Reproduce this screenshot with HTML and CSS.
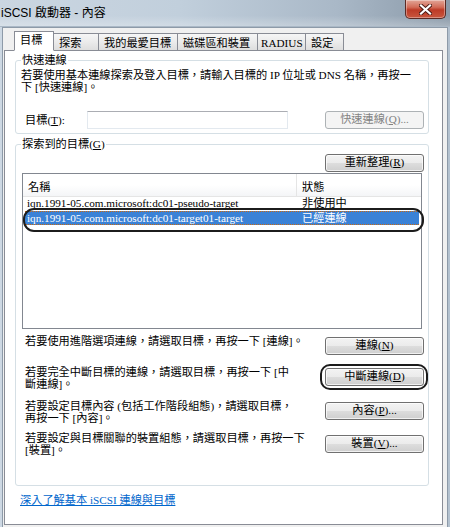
FILE: index.html
```html
<!DOCTYPE html>
<html lang="zh-Hant">
<head>
<meta charset="utf-8">
<title>iSCSI 啟動器 - 內容</title>
<link rel="stylesheet" href="styles.css">
</head>
<body>
<div class="window">
  <div class="titlebar">
    <span class="title">iSCSI 啟動器 - 內容</span>
    <span class="close">
      <svg width="13" height="11" viewBox="0 0 13 11">
        <path d="M2 1.5 L11 9.5 M11 1.5 L2 9.5" stroke="#4a1a14" stroke-width="4" stroke-linecap="square"/>
        <path d="M2 1.5 L11 9.5 M11 1.5 L2 9.5" stroke="#ffffff" stroke-width="2.2" stroke-linecap="square"/>
      </svg>
    </span>
  </div>
  <div class="client">
    <div class="tabs">
      <div class="tab active t1">目標</div>
      <div class="tab t2">探索</div>
      <div class="tab t3">我的最愛目標</div>
      <div class="tab t4">磁碟區和裝置</div>
      <div class="tab t5">RADIUS</div>
      <div class="tab t6">設定</div>
    </div>
    <div class="panel">
      <fieldset class="group g1">
        <legend>快速連線</legend>
        <div class="desc">
          <span class="line">若要使用基本連線探索及登入目標，請輸入目標的 IP 位址或 DNS 名稱，再按一</span>
          <span class="line">下 [快速連線]。</span>
        </div>
        <div class="quick-row">
          <span class="field-label">目標(<u>T</u>):</span>
          <span class="input"></span>
          <span class="btn disabled">快速連線(<u>Q</u>)...</span>
        </div>
      </fieldset>
      <fieldset class="group g2">
        <legend>探索到的目標(<u>G</u>)</legend>
        <div class="refresh-row"><span class="btn">重新整理(<u>R</u>)</span></div>
        <div class="list">
          <div class="list-head"><span class="col-name">名稱</span><span class="col-status">狀態</span></div>
          <div class="list-row"><span class="col-name">iqn.1991-05.com.microsoft:dc01-pseudo-target</span><span class="col-status">非使用中</span></div>
          <div class="list-row selected"><span class="col-name">iqn.1991-05.com.microsoft:dc01-target01-target</span><span class="col-status">已經連線</span><span class="ring row-ring"></span></div>
        </div>
        <div class="action a1">
          <div class="action-text">
            <span class="line">若要使用進階選項連線，請選取目標，再按一下 [連線]。</span>
          </div>
          <span class="btn">連線(<u>N</u>)</span>
        </div>
        <div class="action a2">
          <div class="action-text">
            <span class="line">若要完全中斷目標的連線，請選取目標，再按一下 [中</span>
            <span class="line">斷連線]。</span>
          </div>
          <span class="btn">中斷連線(<u>D</u>)<span class="ring btn-ring"></span></span>
        </div>
        <div class="action a3">
          <div class="action-text">
            <span class="line">若要設定目標內容 (包括工作階段組態)，請選取目標，</span>
            <span class="line">再按一下 [內容]。</span>
          </div>
          <span class="btn">內容(<u>P</u>)...</span>
        </div>
        <div class="action a4">
          <div class="action-text">
            <span class="line">若要設定與目標關聯的裝置組態，請選取目標，再按一下</span>
            <span class="line">[裝置]。</span>
          </div>
          <span class="btn">裝置(<u>V</u>)...</span>
        </div>
      </fieldset>
      <a class="link" href="#">深入了解基本 iSCSI 連線與目標</a>
    </div>
  </div>
</div>
</body>
</html>
```

FILE: styles.css
```css
* { box-sizing: border-box; }
html, body { margin: 0; padding: 0; }
body {
  width: 450px;
  height: 527px;
  overflow: hidden;
  font-family: "Liberation Serif", "Noto Sans CJK TC", serif;
  font-size: 11.2px;
  line-height: 12px;
  color: #000;
  background: #fff;
}

.line {
  display: block;
  height: 12px;
  line-height: 12px;
  white-space: nowrap;
}

.window {
  width: 450px;
  height: 527px;
  display: flex;
  flex-direction: column;
  background: linear-gradient(to right, #cdd8e3 0%, #c4d1de 50%, #b3c1cf 100%);
}

.titlebar {
  height: 27px;
  flex: none;
  display: flex;
  justify-content: space-between;
  align-items: flex-start;
  background:
    linear-gradient(to bottom, rgba(255,255,255,0) 60%, rgba(255,255,255,0.25) 100%),
    linear-gradient(to right, #cbd6e1 0%, #c1cfdc 40%, #a9b8c7 75%, #8a99a8 100%);
  border-bottom: 1px solid #aab8c6;
}
.title {
  font-family: "Liberation Sans", "Noto Sans CJK TC", sans-serif;
  font-size: 12px;
  line-height: 14px;
  height: 14px;
  margin: 6px 0 0 1px;
  white-space: nowrap;
}
.close {
  width: 41px;
  height: 19px;
  margin-right: 4px;
  border: 1px solid #5b2a24;
  border-top: none;
  border-radius: 0 0 5px 5px;
  background: linear-gradient(to bottom, #e2a698 0%, #d26c58 40%, #bd3b27 55%, #c8563e 100%);
  box-shadow: inset 0 0 0 1px rgba(255,255,255,0.35);
  display: flex;
  align-items: center;
  justify-content: center;
}

.client {
  flex: 1;
  margin: 0 2px;
  border: 1px solid #8d9aa8;
  border-bottom: none;
  background: #f0f0f0;
  padding: 3px 4px 2px 1px;
  display: flex;
  flex-direction: column;
}

.tabs {
  display: flex;
  align-items: flex-end;
  height: 20px;
  flex: none;
  margin-left: 10px;
  margin-bottom: -1px;
  position: relative;
  z-index: 1;
}
.tab {
  height: 18px;
  border: 1px solid #898c95;
  background: linear-gradient(to bottom, #f6f6f6 0%, #ebebeb 50%, #dedede 100%);
  padding: 3px 0 0 5px;
  margin-left: -1px;
  white-space: nowrap;
  overflow: hidden;
}
.tab.active {
  height: 20px;
  background: #fff;
  border-bottom-color: #fff;
  padding-top: 2px;
  margin-left: 0;
  position: relative;
  z-index: 2;
}
.t1 { width: 40px; }
.t2 { width: 46px; }
.t3 { width: 80px; }
.t4 { width: 81px; }
.t5 { width: 49px; padding-left: 3px; }
.t6 { width: 39px; }

.panel {
  flex: 1;
  background: #fff;
  border: 1px solid #898c95;
  padding: 0 13px 0 10px;
  display: flex;
  flex-direction: column;
  align-items: flex-start;
}

.group {
  width: 414px;
  margin: 0;
  border: 1px solid #d5dfe5;
  border-radius: 3px;
  padding: 0 4px 0 5px;
  min-width: 0;
  flex: none;
}
.group legend {
  padding: 0 1px;
  margin: 0;
  height: 12px;
  line-height: 12px;
  white-space: nowrap;
}
.g1 { margin-top: 3px; padding-bottom: 4px; }
.g2 { margin-top: 4px; padding-bottom: 29px; }

.desc { margin-top: 3px; }

.quick-row {
  display: flex;
  align-items: center;
  height: 18px;
  margin-top: 18px;
}
.field-label { margin-left: 4px; width: 62px; height: 12px; line-height: 12px; white-space: nowrap; }
.input {
  width: 201px;
  height: 18px;
  border: 1px solid #e3e9ef;
  border-top-color: #abadb3;
  background: #fff;
}
.quick-row .btn { margin-left: auto; }

.btn {
  width: 99px;
  height: 18px;
  flex: none;
  border: 1px solid #707070;
  border-radius: 3px;
  background: linear-gradient(to bottom, #f3f3f3 0%, #ebebeb 50%, #dddddd 51%, #cfcfcf 100%);
  box-shadow: inset 0 0 0 1px rgba(255,255,255,0.7);
  text-align: center;
  line-height: 15px;
  white-space: nowrap;
  position: relative;
}
.btn.disabled {
  border-color: #adb2b5;
  background: #f4f4f4;
  color: #838383;
  box-shadow: none;
}

.refresh-row { display: flex; justify-content: flex-end; margin-top: 4px; height: 18px; }

.list {
  width: 400px;
  height: 156px;
  margin: 1px 0 0 1px;
  border: 1px solid #828790;
  background: #fff;
}
.list-head {
  display: grid;
  grid-template-columns: 274px 1fr;
  height: 23px;
  border-bottom: 1px solid #e5e5e5;
  background: linear-gradient(to bottom, #ffffff 0%, #ffffff 50%, #f4f5f7 100%);
}
.list-head span { height: 22px; line-height: 12px; }
.list-head .col-name { padding: 7px 0 0 5px; border-right: 1px solid #e5e5e5; }
.list-head .col-status { padding: 7px 0 0 5px; }
.list-row {
  display: grid;
  grid-template-columns: 275px 1fr;
  height: 14px;
  margin: 0 2px;
  line-height: 13px;
  white-space: nowrap;
  position: relative;
}
.list-row .col-name, .list-row .col-status { height: 13px; }
.list-row .col-name { padding-left: 2px; }
.list-row .col-status { padding-left: 2px; }
.list-row.selected {
  background: #3b82d6;
  color: #fff;
  border-top: 1px dotted #cc6a10;
  border-bottom: 1px dotted #cc6a10;
  line-height: 12px;
}
.list-row.selected .col-name, .list-row.selected .col-status { height: 12px; }

.ring {
  position: absolute;
  border: 2px solid #1c1c1c;
  border-radius: 11px;
  pointer-events: none;
}
.row-ring { left: -2px; right: -5px; top: -4px; bottom: -8px; }
.btn-ring { left: -6px; right: -5px; top: -5px; bottom: -5px; border-radius: 10px; }

.action {
  display: flex;
  justify-content: space-between;
  align-items: flex-start;
  flex: none;
}
.action-text { margin-left: 4px; }
.a1 { margin-top: 6px; }
.a1 .btn { margin-top: 2px; }
.a2 { margin-top: 11px; }
.a2 .btn { margin-top: 2px; }
.a3 { margin-top: 10px; }
.a3 .btn { margin-top: 2px; }
.a4 { margin-top: 8px; }
.a4 .btn { margin-top: 3px; }

.link {
  display: block;
  height: 12px;
  line-height: 12px;
  margin: 8px 0 0 5px;
  color: #0066cc;
  text-decoration: underline;
  white-space: nowrap;
}
```
